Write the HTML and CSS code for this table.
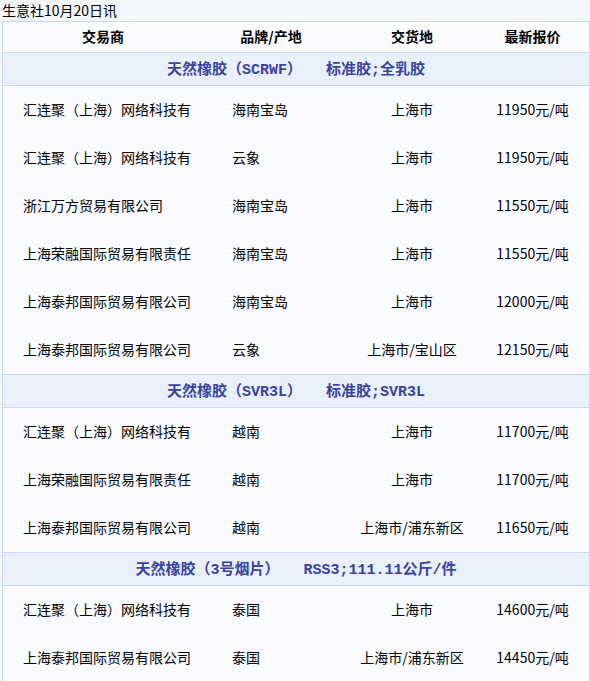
FILE: index.html
```html
<!DOCTYPE html>
<html lang="zh">
<head>
<meta charset="utf-8">
<title>生意社10月20日讯</title>
<link rel="stylesheet" href="styles.css">
</head>
<body>
<div class="page">
  <div class="title">生意社10月20日讯</div>
  <div class="table">
    <div class="row head">
      <div class="c c1">交易商</div>
      <div class="c c2">品牌/产地</div>
      <div class="c c3">交货地</div>
      <div class="c c4">最新报价</div>
    </div>
    <div class="section"><span>天然橡胶（SCRWF）</span><span class="spec">标准胶;全乳胶</span></div>
    <div class="row"><div class="c c1">汇连聚（上海）网络科技有</div><div class="c c2">海南宝岛</div><div class="c c3">上海市</div><div class="c c4">11950元/吨</div></div>
    <div class="row"><div class="c c1">汇连聚（上海）网络科技有</div><div class="c c2">云象</div><div class="c c3">上海市</div><div class="c c4">11950元/吨</div></div>
    <div class="row"><div class="c c1">浙江万方贸易有限公司</div><div class="c c2">海南宝岛</div><div class="c c3">上海市</div><div class="c c4">11550元/吨</div></div>
    <div class="row"><div class="c c1">上海荣融国际贸易有限责任</div><div class="c c2">海南宝岛</div><div class="c c3">上海市</div><div class="c c4">11550元/吨</div></div>
    <div class="row"><div class="c c1">上海泰邦国际贸易有限公司</div><div class="c c2">海南宝岛</div><div class="c c3">上海市</div><div class="c c4">12000元/吨</div></div>
    <div class="row"><div class="c c1">上海泰邦国际贸易有限公司</div><div class="c c2">云象</div><div class="c c3">上海市/宝山区</div><div class="c c4">12150元/吨</div></div>
    <div class="section"><span>天然橡胶（SVR3L）</span><span class="spec">标准胶;SVR3L</span></div>
    <div class="row"><div class="c c1">汇连聚（上海）网络科技有</div><div class="c c2">越南</div><div class="c c3">上海市</div><div class="c c4">11700元/吨</div></div>
    <div class="row"><div class="c c1">上海荣融国际贸易有限责任</div><div class="c c2">越南</div><div class="c c3">上海市</div><div class="c c4">11700元/吨</div></div>
    <div class="row"><div class="c c1">上海泰邦国际贸易有限公司</div><div class="c c2">越南</div><div class="c c3">上海市/浦东新区</div><div class="c c4">11650元/吨</div></div>
    <div class="section"><span>天然橡胶（3号烟片）</span><span class="spec">RSS3;111.11公斤/件</span></div>
    <div class="row"><div class="c c1">汇连聚（上海）网络科技有</div><div class="c c2">泰国</div><div class="c c3">上海市</div><div class="c c4">14600元/吨</div></div>
    <div class="row"><div class="c c1">上海泰邦国际贸易有限公司</div><div class="c c2">泰国</div><div class="c c3">上海市/浦东新区</div><div class="c c4">14450元/吨</div></div>
  </div>
</div>
</body>
</html>
```

FILE: styles.css
```css
html, body {
  margin: 0;
  padding: 0;
  background: #f3f7fc;
}
body {
  font-family: "Noto Sans CJK SC", "Liberation Sans", sans-serif;
  font-size: 14px;
  color: #000;
}
.page {
  padding: 0 1px 0 2px;
}
.title {
  height: 21px;
  line-height: 20px;
  font-size: 14px;
  color: #000;
}
.table {
  width: 586px;
  border: 1px solid #c6d8f5;
  background: #f9fbff;
}
.row {
  display: grid;
  grid-template-columns: 200px 136px 146px 1fr;
  box-sizing: border-box;
  height: 48px;
  padding-bottom: 2px;
  align-items: center;
}
.row.head {
  height: 30px;
  font-weight: bold;
}
.c {
  white-space: nowrap;
  line-height: 20px;
}
.c1 { padding-left: 20px; }
.c2 { padding-left: 29px; }
.c3 { text-align: center; }
.c4 { text-align: center; padding-right: 9px; }
.head .c1, .head .c2 { padding-left: 0; text-align: center; }
.section {
  box-sizing: content-box;
  height: 30px;
  padding-bottom: 2px;
  border-top: 1px solid #c6d8f5;
  border-bottom: 1px solid #c6d8f5;
  background: #e9f0fa;
  display: flex;
  justify-content: center;
  align-items: center;
  font-family: "Liberation Mono", "Noto Sans CJK SC", monospace;
  font-size: 15px;
  font-weight: bold;
  color: #3a43a0;
  white-space: nowrap;
}
.spec {
  margin-left: 24px;
}
```
